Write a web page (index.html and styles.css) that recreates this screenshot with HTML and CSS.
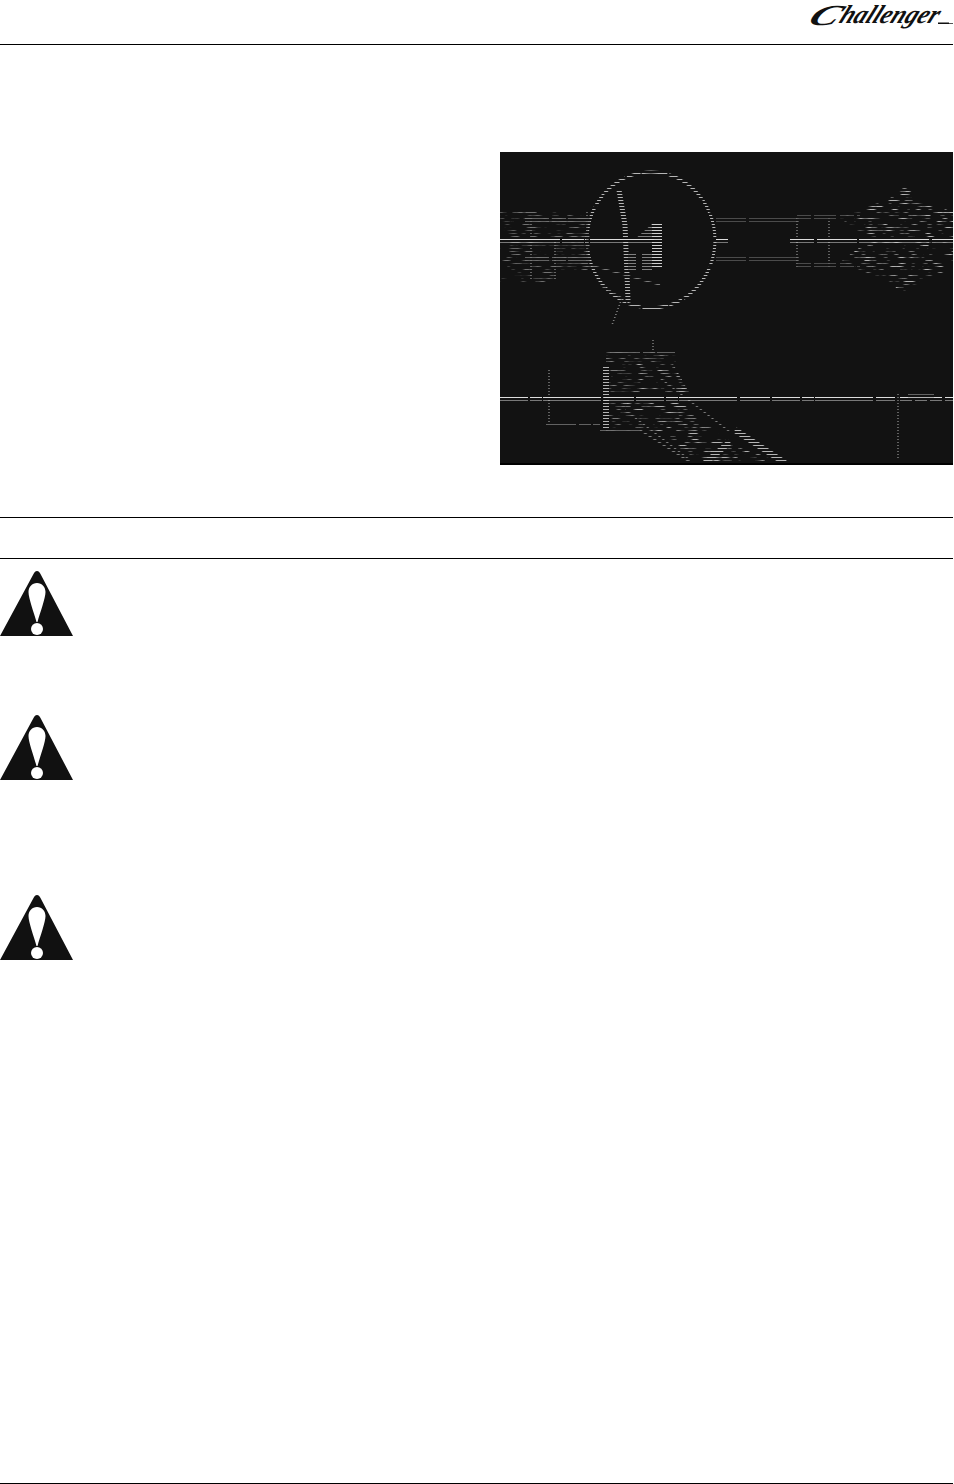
FILE: index.html
```html
<!DOCTYPE html>
<html lang="en">
<head>
    <meta charset="UTF-8">
    <meta name="viewport" content="width=device-width, initial-scale=1.0">
    <title>Challenger</title>
    <link rel="stylesheet" href="styles.css">
</head>
<body>
    <svg class="defs" width="0" height="0">
        <defs>
            <symbol id="warning" viewBox="0 0 73 65">
                <path d="M37 0 C38.500 0 39.500 1 40.500 3 L73 65 L0 65 L33.500 3 C34.500 1 35.500 0 37 0 Z" fill="#111"/>
                <path d="M37 12 C42 12 45.500 16 45.500 21 C45.500 27 40 42 37.500 51 L36.500 51 C34 42 28.500 27 28.500 21 C28.500 16 32 12 37 12 Z" fill="#fff"/>
                <circle cx="37" cy="58" r="6" fill="#fff"/>
            </symbol>
        </defs>
    </svg>

    <header class="page-header">
        <svg class="logo" viewBox="0 0 150 44" role="img" aria-label="Challenger">
            <text class="logo-cap" transform="translate(3 25) skewX(-32) scale(1.5 1)">C</text>
            <text class="logo-text" transform="translate(35 23) skewX(-24) scale(1 1.3)" textLength="98" lengthAdjust="spacingAndGlyphs">hallenger</text>
            <rect x="135" y="22.500" width="11" height="1.500" fill="#111"/>
            <rect x="146" y="23" width="4" height="1" fill="#555"/>
        </svg>
    </header>

    <section class="intro">
        <figure class="photo">
            <svg viewBox="500 152 453 311" width="453" height="311">
                <defs>
                    <pattern id="rows-a" patternUnits="userSpaceOnUse" x="0" y="2" width="8" height="3">
                        <rect width="8" height="1" fill="#fff"/>
                    </pattern>
                    <pattern id="rows-b" patternUnits="userSpaceOnUse" x="0" y="1" width="8" height="3">
                        <rect width="8" height="1" fill="#fff"/>
                    </pattern>
                    <mask id="scan-a" maskUnits="userSpaceOnUse" x="500" y="152" width="453" height="190">
                        <rect x="500" y="152" width="453" height="190" fill="url(#rows-a)"/>
                    </mask>
                    <mask id="scan-b" maskUnits="userSpaceOnUse" x="500" y="330" width="453" height="135">
                        <rect x="500" y="330" width="453" height="135" fill="url(#rows-b)"/>
                    </mask>
                    <filter id="noise" x="0" y="0" width="100%" height="100%" color-interpolation-filters="sRGB">
                        <feTurbulence type="fractalNoise" baseFrequency="0.09 0.8" numOctaves="2" seed="7"/>
                        <feColorMatrix type="matrix" values="0 0 0 0 .7  0 0 0 0 .7  0 0 0 0 .7  5 0 0 0 -2.500"/>
                    </filter>
                    <clipPath id="hub-clip">
                        <path d="M905 186 L920 200 L953 212 L953 268 L920 282 L905 296 L890 282 L840 262 L870 240 L840 218 L890 198 Z"/>
                    </clipPath>
                    <clipPath id="left-clip">
                        <path d="M500 212 H590 V272 H556 V284 H500 Z"/>
                    </clipPath>
                    <clipPath id="body-clip">
                        <path d="M632 362 H672 L690 394 L640 394 Z M622 403 H682 L726 440 L784 463 L702 463 L655 432 Z"/>
                    </clipPath>
                    <clipPath id="body-soft-clip">
                        <path d="M606 352 H676 V362 H632 L640 394 H606 Z M606 403 H622 L655 432 H606 Z"/>
                    </clipPath>
                </defs>

                <g mask="url(#scan-a)" fill="none">
                    <rect x="500" y="205" width="90" height="85" fill="#000" filter="url(#noise)" clip-path="url(#left-clip)" opacity=".6"/>
                    <rect x="826" y="186" width="127" height="110" fill="#000" filter="url(#noise)" clip-path="url(#hub-clip)"/>

                    <ellipse class="stroke-bright" cx="651" cy="240" rx="64" ry="68" stroke-width="3" stroke-dasharray="26 2 14 1"/>

                    <path class="stroke-mid" stroke-dasharray="24 3 14 2" d="M525 219 H590 M525 222 H590 M525 258 H590 M525 261 H590"/>
                    <path class="stroke-mid" stroke-width="6" d="M531 216 V280 M555 240 V280"/>
                    <path class="stroke-mid" stroke-width="5" d="M587 212 V268"/>
                    <path class="stroke-bright" stroke-width="5" d="M619 190 L625 225 L628 300"/>
                    <path class="stroke-mid" stroke-width="3" d="M590 265 L660 285 M600 285 L622 298 L612 325"/>
                    <rect class="fill-bright" x="652" y="222" width="10" height="45"/>
                    <path class="fill-mid" d="M652 224 V240 H634 Z"/>
                    <rect class="fill-mid" x="628" y="252" width="8" height="18"/>
                    <rect class="fill-mid" x="642" y="252" width="10" height="18"/>

                    <path class="stroke-dim" stroke-dasharray="30 3 50 2" d="M716 218 H800 M716 221 H800 M716 258 H800 M716 261 H800"/>
                    <path class="stroke-mid" stroke-width="6" d="M797 216 V268 M829 216 V268"/>
                    <path class="stroke-dim" stroke-dasharray="14 3 22 4" d="M797 216 H860 M797 219 H840 M797 264 H850 M797 267 H860"/>

                    <path class="stroke-axis" stroke-width="4" stroke-dasharray="60 2 22 1" d="M500 240.500 H586"/>
                    <path class="stroke-axis" stroke-width="4" d="M590 240.500 H654"/>
                    <path class="stroke-axis" stroke-width="4" d="M716 240.500 H728"/>
                    <path class="stroke-axis" stroke-width="4" stroke-dasharray="24 3 40 2 70 3" d="M790 240.500 H953"/>
                </g>

                <g mask="url(#scan-b)" fill="none">
                    <rect x="600" y="345" width="190" height="120" fill="#000" filter="url(#noise)" clip-path="url(#body-clip)"/>
                    <rect x="600" y="345" width="90" height="95" fill="#000" filter="url(#noise)" clip-path="url(#body-soft-clip)" opacity=".65"/>

                    <path class="stroke-mid" stroke-dasharray="30 3 12 2" d="M546 369 H592 M546 424 H600 M595 357 H675 M610 352 H675 M595 366 H675"/>
                    <path class="stroke-mid" stroke-width="5" d="M549 368 V424 M653 338 V352"/>
                    <path class="stroke-bright" stroke-width="6" d="M606 365 V428"/>
                    <path class="stroke-mid" stroke-width="3" d="M600 430 H640 L690 462 M625 410 L690 460"/>
                    <path class="stroke-bright" stroke-width="6" d="M735 430 L785 463 M705 463 L730 442"/>
                    <path class="stroke-mid" stroke-width="4" d="M660 378 L730 432"/>

                    <path class="stroke-axis" stroke-width="4" stroke-dasharray="28 2 12 1 58 3 30 2" d="M500 398.500 H895"/>
                    <path class="stroke-axis" stroke-width="4" stroke-dasharray="12 3" d="M900 398.500 H953"/>
                    <path class="stroke-bright" stroke-width="5" d="M908 397 H934"/>
                    <path class="stroke-mid" stroke-width="5" d="M898 392 V460"/>
                    <path class="stroke-mid" stroke-width="12" d="M892 402 H904 M892 408 H904"/>
                </g>
            </svg>
        </figure>
    </section>

    <div class="section-title"></div>

    <section class="notices">
        <div class="notice">
            <svg class="warning-icon"><use href="#warning"/></svg>
        </div>
        <div class="notice notice-long">
            <svg class="warning-icon"><use href="#warning"/></svg>
        </div>
        <div class="notice">
            <svg class="warning-icon"><use href="#warning"/></svg>
        </div>
    </section>

    <footer class="page-footer"></footer>
</body>
</html>
```

FILE: styles.css
```css
html,
body {
    margin: 0;
    padding: 0;
}

body {
    display: flex;
    flex-direction: column;
    min-height: 1484px;
    width: 953px;
    background-color: #fff;
    color: #000;
    font-family: "Liberation Sans", Arial, sans-serif;
}

.defs {
    position: absolute;
}

.page-header {
    display: flex;
    justify-content: flex-end;
    align-items: flex-start;
    height: 44px;
    border-bottom: 1px solid #000;
}

.logo {
    display: block;
    width: 150px;
    height: 44px;
    overflow: visible;
}

.logo-text,
.logo-cap {
    font-family: "Liberation Serif", serif;
    font-style: italic;
    font-weight: 700;
    fill: #111;
}

.logo-text {
    font-size: 20px;
}

.logo-cap {
    font-size: 29px;
}

.intro {
    display: flex;
    justify-content: flex-end;
    padding-top: 107px;
}

.photo {
    margin: 0;
    width: 453px;
    height: 311px;
    background-color: #121212;
    border-bottom: 2px solid #000;
    line-height: 0;
}

.stroke-axis {
    stroke: #ddd;
}

.stroke-bright {
    stroke: #b5b5b5;
}

.stroke-mid {
    stroke: #7d7d7d;
    stroke-width: 1.500;
}

.stroke-dim {
    stroke: #5f5f5f;
    stroke-width: 1.500;
}

.fill-bright {
    fill: #d0d0d0;
}

.fill-mid {
    fill: #808080;
}

.section-title {
    height: 40px;
    margin-top: 52px;
    border-top: 1px solid #000;
    border-bottom: 1px solid #000;
}

.notices {
    display: flex;
    flex-direction: column;
    padding-top: 12px;
}

.notice {
    height: 144px;
}

.notice-long {
    height: 180px;
}

.warning-icon {
    display: block;
    width: 73px;
    height: 65px;
}

.page-footer {
    margin-top: auto;
    border-top: 1px solid #000;
}
```
